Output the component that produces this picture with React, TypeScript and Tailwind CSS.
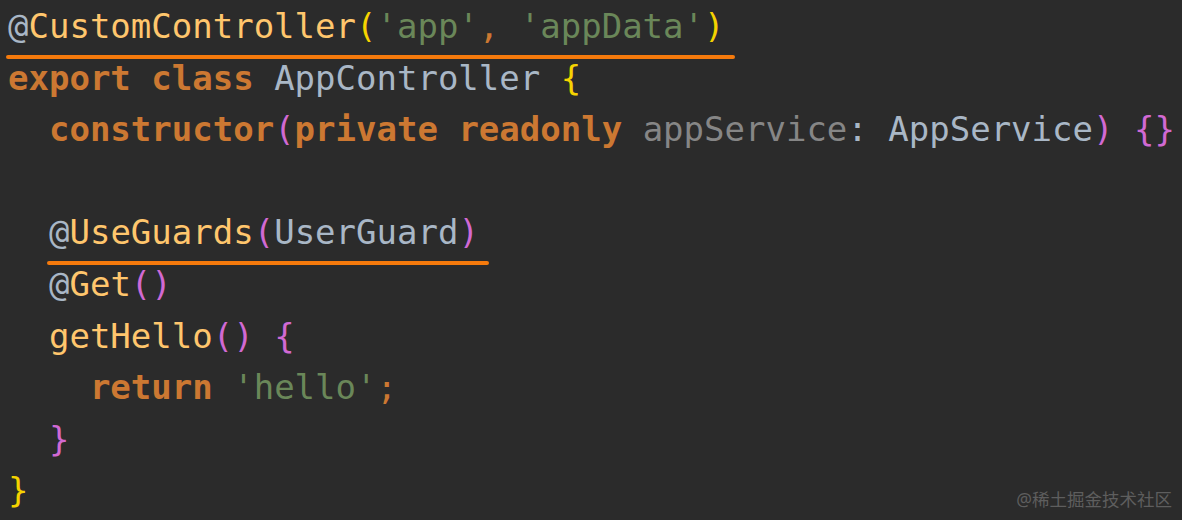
import React from "react";

const K = ({ children }: { children: React.ReactNode }) => (
  <span className="text-[#cc7832] font-bold">{children}</span>
);
const S = ({ children }: { children: React.ReactNode }) => (
  <span className="text-[#6a8759]">{children}</span>
);
const D = ({ children }: { children: React.ReactNode }) => (
  <span className="text-[#ffc66d]">{children}</span>
);
const At = () => <span className="text-[#a9b7c6]">@</span>;
const Y = ({ children }: { children: React.ReactNode }) => (
  <span className="text-[#f5d300]">{children}</span>
);
const P = ({ children }: { children: React.ReactNode }) => (
  <span className="text-[#d169d3]">{children}</span>
);
const G = ({ children }: { children: React.ReactNode }) => (
  <span className="text-[#868686]">{children}</span>
);
const O = ({ children }: { children: React.ReactNode }) => (
  <span className="text-[#cc7832]">{children}</span>
);

const Underlined = ({ children }: { children: React.ReactNode }) => (
  <span className="relative inline-block">
    {children}
    <span className="absolute left-[-2px] right-[-10px] top-[54px] h-[4px] rounded-full bg-[#f57a0c]" />
  </span>
);

const Line = ({ children }: { children?: React.ReactNode }) => (
  <div className="h-[51.6px] leading-[51.6px] whitespace-pre">{children}</div>
);

export default function App() {
  return (
    <div className="relative w-[1182px] h-[520px] overflow-hidden bg-[#2b2b2b]">
      <div
        className="pl-[8px] pt-[1px] text-[34px] text-[#a9b7c6]"
        style={{ fontFamily: '"DejaVu Sans Mono", monospace' }}
      >
        <Line>
          <Underlined>
            <At />
            <D>CustomController</D>
            <Y>(</Y>
            <S>'app'</S>
            <O>, </O>
            <S>'appData'</S>
            <Y>)</Y>
          </Underlined>
        </Line>
        <Line>
          <K>export</K> <K>class</K> AppController <Y>{"{"}</Y>
        </Line>
        <Line>
          {"  "}
          <K>constructor</K>
          <P>(</P>
          <K>private</K> <K>readonly</K> <G>appService</G>: AppService<P>)</P>{" "}
          <P>{"{}"}</P>
        </Line>
        <Line />
        <Line>
          {"  "}
          <Underlined>
            <At />
            <D>UseGuards</D>
            <P>(</P>UserGuard<P>)</P>
          </Underlined>
        </Line>
        <Line>
          {"  "}
          <At />
          <D>Get</D>
          <P>()</P>
        </Line>
        <Line>
          {"  "}
          <D>getHello</D>
          <P>()</P> <P>{"{"}</P>
        </Line>
        <Line>
          {"    "}
          <K>return</K> <S>'hello'</S>
          <O>;</O>
        </Line>
        <Line>
          {"  "}
          <P>{"}"}</P>
        </Line>
        <Line>
          <Y>{"}"}</Y>
        </Line>
      </div>
      <div
        className="absolute right-[10px] bottom-[8px] text-[17.5px] text-[#5e5e5e]"
        style={{ fontFamily: '"Noto Sans", "Noto Sans CJK SC", sans-serif' }}
      >
        @稀土掘金技术社区
      </div>
    </div>
  );
}
